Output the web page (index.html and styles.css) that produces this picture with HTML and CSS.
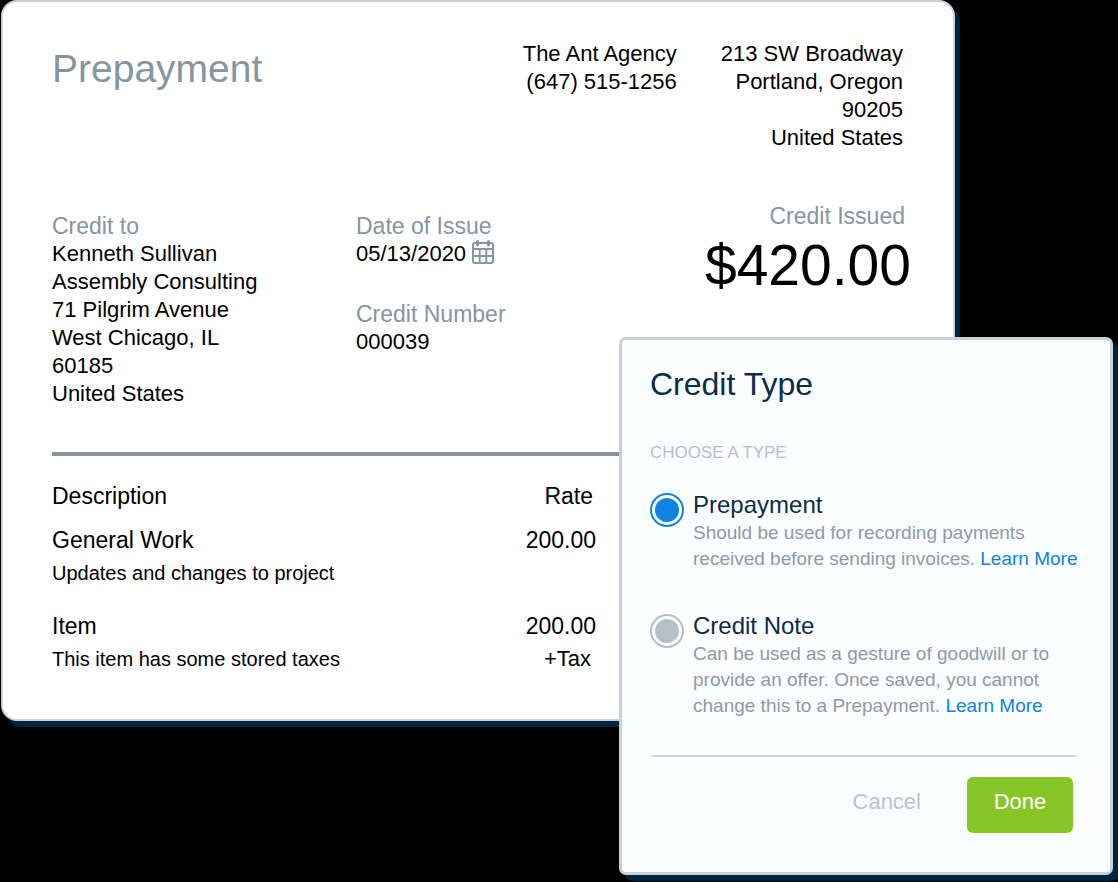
FILE: index.html
```html
<!DOCTYPE html>
<html lang="en">
<head>
<meta charset="utf-8">
<title>Prepayment</title>
<link rel="stylesheet" href="styles.css">
</head>
<body>
<main class="stage">
  <article class="invoice">
    <header class="invoice-header">
      <h1 class="invoice-title">Prepayment</h1>
      <p class="agency">The Ant Agency<br>(647) 515-1256</p>
      <address class="agency-address">213 SW Broadway<br>Portland, Oregon<br>90205<br>United States</address>
    </header>
    <section class="details">
      <div class="client">
        <h2 class="label">Credit to</h2>
        <p>Kenneth Sullivan<br>Assembly Consulting<br>71 Pilgrim Avenue<br>West Chicago, IL<br>60185<br>United States</p>
      </div>
      <div class="meta">
        <div>
          <h2 class="label">Date of Issue</h2>
          <p class="date">05/13/2020
            <svg class="calendar" viewBox="0 0 22 24" width="22" height="24" aria-hidden="true">
              <rect x="1" y="3" width="20" height="20" rx="2"/>
              <path d="M1 9H21M1 16H21M7.700 9V23M14.300 9V23"/>
              <path class="calendar-rings" d="M5.500 1.500V5M16.500 1.500V5"/>
            </svg>
          </p>
        </div>
        <div>
          <h2 class="label">Credit Number</h2>
          <p>000039</p>
        </div>
      </div>
      <div class="total">
        <h2 class="label total-label">Credit Issued</h2>
        <p class="amount">$420.00</p>
      </div>
    </section>
    <div class="items">
      <table class="items-table">
        <thead>
          <tr><th scope="col">Description</th><th scope="col" class="num">Rate</th></tr>
        </thead>
        <tbody>
          <tr>
            <td>General Work<span class="note">Updates and changes to project</span></td>
            <td class="num">200.00</td>
          </tr>
          <tr>
            <td>Item<span class="note">This item has some stored taxes</span></td>
            <td class="num">200.00<span class="tax">+Tax</span></td>
          </tr>
        </tbody>
      </table>
    </div>
  </article>

  <form class="dialog" role="dialog" aria-labelledby="dialog-title">
    <h2 class="dialog-title" id="dialog-title">Credit Type</h2>
    <fieldset class="choices">
      <legend class="legend">CHOOSE A TYPE</legend>
      <div class="choice">
        <input class="radio" type="radio" name="type" id="prepayment" checked>
        <div>
          <label class="choice-name" for="prepayment">Prepayment</label>
          <p class="hint">Should be used for recording payments<br>received before sending invoices. <a href="#">Learn More</a></p>
        </div>
      </div>
      <div class="choice">
        <input class="radio" type="radio" name="type" id="credit-note">
        <div>
          <label class="choice-name" for="credit-note">Credit Note</label>
          <p class="hint">Can be used as a gesture of goodwill or to<br>provide an offer. Once saved, you cannot<br>change this to a Prepayment. <a href="#">Learn More</a></p>
        </div>
      </div>
    </fieldset>
    <footer class="actions">
      <button class="cancel" type="button">Cancel</button>
      <button class="done" type="button">Done</button>
    </footer>
  </form>
</main>
</body>
</html>
```
FILE: styles.css
```css
* {
  box-sizing: border-box;
}

body {
  margin: 0;
  background: #000;
  color: #000;
  font: 22px/28px "Liberation Sans", Arial, sans-serif;
}

h1, h2, p {
  margin: 0;
  font-weight: normal;
}

.stage {
  position: relative;
  min-height: 100vh;
  overflow: hidden;
}

.invoice {
  margin: 0 163px 0 1px;
  padding: 38px 42px 21px 49px;
  background: #fff;
  border: 2px solid #c9d2d9;
  border-radius: 16px;
  box-shadow: 5px 6px 0 #00253f;
}

.invoice-header {
  display: flex;
  gap: 44px;
  padding-right: 8px;
  text-align: right;
}

.invoice-title {
  flex: 1;
  padding-top: 4px;
  color: #8496a2;
  font-size: 39px;
  line-height: 50px;
  text-align: left;
}

.agency-address {
  font-style: normal;
}

.details {
  display: grid;
  grid-template-columns: 304px 1fr auto;
  margin-top: 50px;
}

.client,
.meta {
  padding-top: 10px;
}

.meta {
  display: flex;
  flex-direction: column;
  gap: 32px;
}

.label {
  color: #8496a2;
  font-size: 23px;
  line-height: 28px;
}

.date {
  display: flex;
  align-items: center;
  gap: 6px;
}

.calendar {
  margin-bottom: 4px;
  fill: none;
  stroke: #8496a2;
  stroke-width: 2;
}

.calendar-rings {
  stroke-width: 3;
  stroke-linecap: round;
}

.total {
  text-align: right;
}

.total-label {
  padding-right: 6px;
}

.amount {
  font-size: 57px;
  line-height: 70px;
}

.items {
  margin-top: 44px;
  padding-top: 26px;
  border-top: 4px solid #8496a2;
}

.items-table {
  width: 544px;
  max-width: 100%;
  border-collapse: collapse;
  font-size: 23px;
  line-height: 28px;
}

.items-table th,
.items-table td {
  padding: 0 0 16px;
  font-weight: normal;
  text-align: left;
  vertical-align: top;
}

.items-table td {
  padding-bottom: 25px;
}

.items-table .num {
  text-align: right;
}

.items-table th.num {
  padding-right: 3px;
}

.note,
.tax {
  display: block;
  padding-top: 5px;
}

.note {
  font-size: 20px;
}

.tax {
  padding-right: 5px;
  font-size: 22px;
}

.dialog {
  position: absolute;
  top: 337px;
  right: 5px;
  width: 494px;
  padding: 24px 34px 39px 28px;
  background: #fcfdff;
  border: 3px solid #c9d2d9;
  border-radius: 7px;
  box-shadow: 6px 6px 0 #00253f;
  color: #0a2d47;
}

.dialog-title {
  font-size: 32px;
  line-height: 40px;
}

.choices {
  display: grid;
  gap: 40px;
  margin: 0;
  padding: 0 0 36px;
  border: 0;
}

.legend {
  padding: 35px 0 24px;
  color: #b4bfc8;
  font-size: 17px;
  line-height: 28px;
}

.choice {
  display: flex;
  gap: 9px;
}

.radio {
  flex: none;
  appearance: none;
  width: 34px;
  height: 34px;
  margin: 2px 0 0;
  padding: 3px;
  border: 2px solid #b4bfc8;
  border-radius: 50%;
  background: #b4bfc8 content-box;
}

.radio:checked {
  border-color: #0f83df;
  background-color: #0f83df;
}

.choice-name {
  display: block;
  padding-bottom: 1px;
  font-size: 24px;
  line-height: 28px;
}

.hint {
  color: #8c9ba8;
  font-size: 19px;
  line-height: 26px;
  white-space: nowrap;
}

.hint a {
  color: #0f83df;
  text-decoration: none;
}

.actions {
  display: flex;
  justify-content: flex-end;
  gap: 46px;
  margin-left: 2px;
  padding: 20px 3px 0 0;
  border-top: 2px solid #cbd4db;
}

.actions button {
  padding: 0;
  border: 0;
  background: none;
  font: inherit;
  line-height: 50px;
}

.actions .cancel {
  padding-bottom: 6px;
  color: #b9c4cc;
}

.actions .done {
  width: 106px;
  padding-bottom: 6px;
  border-radius: 6px;
  background: #85c626;
  color: #fff;
}
```
